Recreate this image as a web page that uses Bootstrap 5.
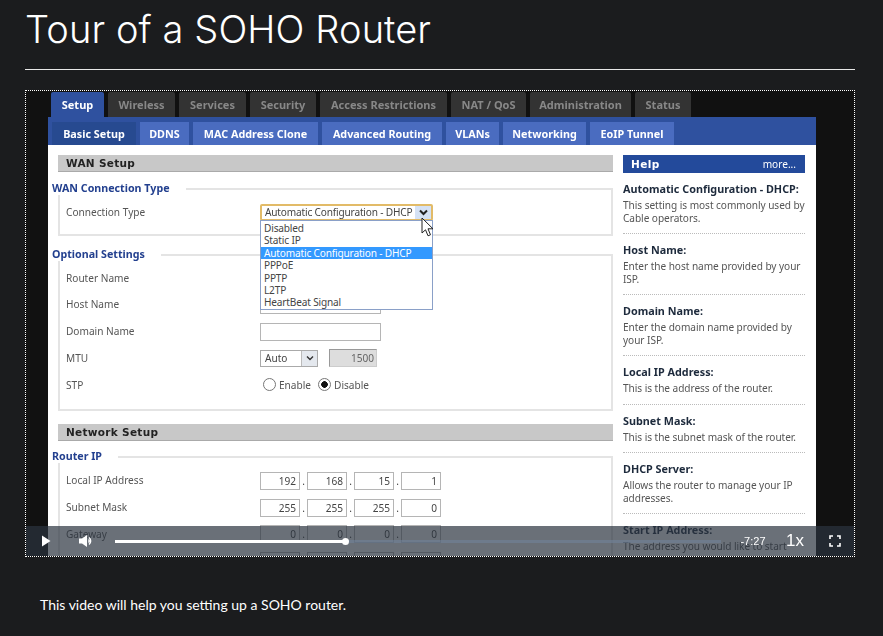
<!DOCTYPE html>
<html lang="en">
<head>
  <meta charset="UTF-8">
  <title>Tour of a SOHO Router</title>
  <meta name="viewport" content="width=device-width, initial-scale=1">
  <link href="https://cdn.jsdelivr.net/npm/bootstrap@5.3.0/dist/css/bootstrap.min.css" rel="stylesheet">
  <style>
    html, body { height: 100%; }
    body { background: #1b1c1e; color: #fff; overflow: hidden; font-family: "Lato", sans-serif; }
    .page-wrap { padding: 0 28px 0 25px; }
    .page-title { font-family: "Inter", sans-serif; font-weight: 300; font-size: 38px; letter-spacing: .1px; line-height: 44px; margin: 7px 0 0; height: 44px; color: #fff; }
    .page-rule { border-top: 1px solid #e8e8e8; opacity: 1; margin: 18px 0 20px; }

    /* video frame */
    .video-frame { position: relative; height: 467px; border: 1px dotted #fff; background: #111; padding: 1px 0 0 22px; overflow: hidden; }
    .router-ui { width: 768px; font-family: "Noto Sans", sans-serif; font-size: 10.1px; color: #555; filter: blur(.3px); }

    .main-tabs { padding-left: 3px; gap: 4px; height: 25px; }
    .main-tab { background: #333; color: #888; font-weight: 700; font-size: 11px; line-height: 25px; text-align: center; white-space: nowrap; border-radius: 2px 2px 0 0; }
    .main-tab.is-on { background: #2f519f; color: #fff; }
    .main-tab:nth-child(1) { width: 53px; }
    .main-tab:nth-child(2), .main-tab:nth-child(3) { width: 67px; }
    .main-tab:nth-child(4) { width: 66px; }
    .main-tab:nth-child(5) { width: 127px; }
    .main-tab:nth-child(6) { width: 75px; }
    .main-tab:nth-child(7) { width: 101px; }
    .main-tab:nth-child(8) { width: 56px; }
    .sub-tabs { background: #2f519f; height: 28px; padding: 5px 0 0 4px; gap: 4px; }
    .sub-tab { background: #4a6cc0; color: #fff; font-weight: 700; font-size: 10.8px; line-height: 23px; text-align: center; white-space: nowrap; }
    .sub-tab.is-on { background: #274a90; }
    .sub-tab:nth-child(1), .sub-tab:nth-child(7) { width: 84px; }
    .sub-tab:nth-child(2) { width: 49px; }
    .sub-tab:nth-child(3) { width: 125px; }
    .sub-tab:nth-child(4) { width: 120px; }
    .sub-tab:nth-child(5) { width: 53px; }
    .sub-tab:nth-child(6) { width: 83px; }

    .router-body { background: #fff; padding-left: 10px; gap: 10px; height: 420px; }
    .left-col { width: 555px; }
    .help-col { width: 182px; }

    .sec-bar { background: #c8c8c8; border-bottom: 1px solid #aaa; height: 17px; margin-top: 10px; padding-left: 8px; font-family: "DejaVu Sans", sans-serif; font-weight: 700; font-size: 10.5px; line-height: 17px; letter-spacing: .3px; color: #222; }
    .sec-bar.sec-two { margin-top: 13px; }
    .legend-row { height: 14px; margin: 9px 0 0 -6px; }
    .legend-row.legend-gap { margin-top: 11px; }
    .legend-row.legend-tight { margin-top: 8px; }
    .legend-text { color: #23408f; font-weight: 700; font-size: 10.7px; line-height: 14px; padding-right: 16px; white-space: nowrap; }
    .legend-line { border-top: 2px solid #e4e4e4; border-right: 2px solid #e4e4e4; margin-top: 7px; }
    .field-box { border: 2px solid #e4e4e4; border-top: 0; padding: 4px 0 10px 6px; }
    .field-box.box-short { padding-bottom: 8px; }
    .field-box.box-low { padding-top: 5px; }
    .field-row { height: 26.75px; }
    .field-label { width: 194px; flex: none; color: #555; }
    .plain-input { width: 121px; height: 18px; border: 1px solid #b5b5b5; border-radius: 0; padding: 0 3px; font-size: 10.1px; color: #444; background: #fff; }
    .mtu-select { width: 58px; height: 17px; border: 1px solid #aaa; color: #444; background: #fff; padding-left: 4px; line-height: 15px; margin-right: 11px; }
    .mtu-arrow { width: 16px; height: 100%; background: #e4e8ee; border-left: 1px solid #bbb; }
    .mtu-value { width: 48px; height: 18px; background: #ddd; border: 1px solid #ccc; border-top-color: #999; border-left-color: #999; text-align: right; padding-right: 2px; line-height: 16px; color: #666; }
    .stp-radio { width: 13px; height: 13px; border: 1px solid #777; border-radius: 50%; background: #fff; margin: -2px 3px 0 -1px; }
    .stp-radio.is-on { background: radial-gradient(circle, #111 0 3px, #fff 3.6px); }
    .ip-box { width: 40px; height: 18px; border: 1px solid #b5b5b5; border-radius: 0; padding: 0 3px; text-align: right; font-size: 10.1px; color: #444; background: #fff; }
    .ip-dot { width: 7px; text-align: center; color: #444; line-height: 22px; }

    .conn-select { position: relative; width: 173px; height: 17px; border: 2px solid #e2bb68; border-radius: 2px; background: #fff; color: #444; padding-left: 3px; line-height: 13px; letter-spacing: -.17px; white-space: nowrap; }
    .conn-arrow { position: absolute; right: 0; top: 0; width: 16px; height: 13px; background: #d5e2f5; }
    .conn-menu { position: absolute; left: -2px; top: 14px; width: 173px; background: #fff; border: 1px solid #8aa0c8; line-height: 12.4px; padding: 1px 0 0; z-index: 3; color: #444; font-size: 10.1px; }
    .conn-menu div { padding-left: 3px; }
    .conn-menu .is-hover { background: #3399ff; color: #fff; }
    .mouse-arrow { position: absolute; left: 159px; top: 11px; z-index: 4; }

    .help-bar { background: #234a9b; color: #fff; height: 18px; margin-top: 10px; padding: 0 9px 0 8px; line-height: 18px; }
    .help-bar b { font-family: "DejaVu Sans", sans-serif; font-size: 10.5px; letter-spacing: .4px; }
    .help-item { padding: 9px 0; border-bottom: 1px dotted #bbb; }
    .help-item h6 { margin: 0 0 4px; color: #1d2a3c; font-family: "Noto Sans", sans-serif; font-weight: 700; font-size: 10.8px; line-height: 13px; }
    .help-item p { margin: 0; line-height: 12.5px; color: #555; white-space: nowrap; letter-spacing: -.05px; }

    /* player controls */
    .player-bar { position: absolute; left: 0; right: 0; bottom: 0; height: 30px; background: rgba(43, 51, 63, .7); color: #fff; z-index: 5; }
    .ctl-box { width: 40px; height: 30px; flex: none; }
    .track { position: relative; width: 606px; height: 3px; margin-left: 9px; background: rgba(115, 133, 159, .55); flex: none; }
    .track-done { position: absolute; left: 0; top: 0; height: 3px; background: #fff; }
    .track-knob { position: absolute; left: 227px; top: -2px; width: 7px; height: 7px; border-radius: 50%; background: #fff; }
    .time-box { width: 54px; flex: none; font-family: "Liberation Sans", sans-serif; font-size: 11px; text-align: center; padding-left: 10px; }
    .rate-box { font-family: "Liberation Sans", sans-serif; font-size: 17px; }

    .desc-box { height: 79px; padding: 38px 0 0 15px; font-size: 14px; line-height: 20px; }
  </style>
</head>
<body>
  <div class="page-wrap">
    <h1 class="page-title">Tour of a SOHO Router</h1>
    <hr class="page-rule">

    <div class="video-frame">
      <div class="router-ui">
        <!-- top tabs -->
        <div class="main-tabs d-flex">
          <div class="main-tab is-on">Setup</div>
          <div class="main-tab">Wireless</div>
          <div class="main-tab">Services</div>
          <div class="main-tab">Security</div>
          <div class="main-tab">Access Restrictions</div>
          <div class="main-tab">NAT / QoS</div>
          <div class="main-tab">Administration</div>
          <div class="main-tab">Status</div>
        </div>
        <div class="sub-tabs d-flex">
          <div class="sub-tab is-on">Basic Setup</div>
          <div class="sub-tab">DDNS</div>
          <div class="sub-tab">MAC Address Clone</div>
          <div class="sub-tab">Advanced Routing</div>
          <div class="sub-tab">VLANs</div>
          <div class="sub-tab">Networking</div>
          <div class="sub-tab">EoIP Tunnel</div>
        </div>

        <div class="router-body d-flex">
          <div class="left-col">
            <div class="sec-bar">WAN Setup</div>

            <div class="legend-row d-flex">
              <div class="legend-text">WAN Connection Type</div>
              <div class="legend-line flex-grow-1"></div>
            </div>
            <div class="field-box box-short">
              <div class="field-row d-flex align-items-center">
                <div class="field-label">Connection Type</div>
                <div class="conn-select">
                  Automatic Configuration - DHCP
                  <div class="conn-arrow d-flex align-items-center justify-content-center">
                    <svg width="9" height="7" viewBox="0 0 9 7"><path d="M1 1.5 4.5 5 8 1.5" fill="none" stroke="#222" stroke-width="2"/></svg>
                  </div>
                  <div class="conn-menu">
                    <div>Disabled</div>
                    <div>Static IP</div>
                    <div class="is-hover">Automatic Configuration - DHCP</div>
                    <div>PPPoE</div>
                    <div>PPTP</div>
                    <div>L2TP</div>
                    <div>HeartBeat Signal</div>
                  </div>
                  <svg class="mouse-arrow" width="13" height="20" viewBox="0 0 13 20"><path d="M1 1v15l3.5-3.2 2.5 6 2.5-1-2.5-6h5z" fill="#fff" stroke="#222" stroke-width="1"/></svg>
                </div>
              </div>
            </div>

            <div class="legend-row legend-gap d-flex">
              <div class="legend-text">Optional Settings</div>
              <div class="legend-line flex-grow-1"></div>
            </div>
            <div class="field-box">
              <div class="field-row d-flex align-items-center">
                <div class="field-label">Router Name</div>
                <input class="plain-input" type="text">
              </div>
              <div class="field-row d-flex align-items-center">
                <div class="field-label">Host Name</div>
                <input class="plain-input" type="text">
              </div>
              <div class="field-row d-flex align-items-center">
                <div class="field-label">Domain Name</div>
                <input class="plain-input" type="text">
              </div>
              <div class="field-row d-flex align-items-center">
                <div class="field-label">MTU</div>
                <div class="mtu-select d-flex justify-content-between">
                  Auto
                  <div class="mtu-arrow d-flex align-items-center justify-content-center">
                    <svg width="8" height="6" viewBox="0 0 8 6"><path d="M1 1.5 4 4.5 7 1.5" fill="none" stroke="#333" stroke-width="1.4"/></svg>
                  </div>
                </div>
                <div class="mtu-value">1500</div>
              </div>
              <div class="field-row d-flex align-items-center">
                <div class="field-label">STP</div>
                <div class="d-flex align-items-center ms-1">
                  <span class="stp-radio"></span><span class="me-2">Enable</span>
                  <span class="stp-radio is-on"></span><span>Disable</span>
                </div>
              </div>
            </div>

            <div class="sec-bar sec-two">Network Setup</div>

            <div class="legend-row legend-tight d-flex">
              <div class="legend-text">Router IP</div>
              <div class="legend-line flex-grow-1"></div>
            </div>
            <div class="field-box box-low">
              <div class="field-row d-flex align-items-center">
                <div class="field-label">Local IP Address</div>
                <input class="ip-box" type="text" value="192"><span class="ip-dot">.</span>
                <input class="ip-box" type="text" value="168"><span class="ip-dot">.</span>
                <input class="ip-box" type="text" value="15"><span class="ip-dot">.</span>
                <input class="ip-box" type="text" value="1">
              </div>
              <div class="field-row d-flex align-items-center">
                <div class="field-label">Subnet Mask</div>
                <input class="ip-box" type="text" value="255"><span class="ip-dot">.</span>
                <input class="ip-box" type="text" value="255"><span class="ip-dot">.</span>
                <input class="ip-box" type="text" value="255"><span class="ip-dot">.</span>
                <input class="ip-box" type="text" value="0">
              </div>
              <div class="field-row d-flex align-items-center">
                <div class="field-label">Gateway</div>
                <input class="ip-box" type="text" value="0"><span class="ip-dot">.</span>
                <input class="ip-box" type="text" value="0"><span class="ip-dot">.</span>
                <input class="ip-box" type="text" value="0"><span class="ip-dot">.</span>
                <input class="ip-box" type="text" value="0">
              </div>
              <div class="field-row d-flex align-items-center">
                <div class="field-label"></div>
                <input class="ip-box" type="text"><span class="ip-dot"></span>
                <input class="ip-box" type="text"><span class="ip-dot"></span>
                <input class="ip-box" type="text"><span class="ip-dot"></span>
                <input class="ip-box" type="text">
              </div>
            </div>
          </div>

          <div class="help-col">
            <div class="help-bar d-flex justify-content-between"><b>Help</b><span>more...</span></div>
            <div class="help-item"><h6>Automatic Configuration - DHCP:</h6><p>This setting is most commonly used by<br>Cable operators.</p></div>
            <div class="help-item"><h6>Host Name:</h6><p>Enter the host name provided by your<br>ISP.</p></div>
            <div class="help-item"><h6>Domain Name:</h6><p>Enter the domain name provided by<br>your ISP.</p></div>
            <div class="help-item"><h6>Local IP Address:</h6><p>This is the address of the router.</p></div>
            <div class="help-item"><h6>Subnet Mask:</h6><p>This is the subnet mask of the router.</p></div>
            <div class="help-item"><h6>DHCP Server:</h6><p>Allows the router to manage your IP<br>addresses.</p></div>
            <div class="help-item"><h6>Start IP Address:</h6><p>The address you would like to start</p></div>
          </div>
        </div>
      </div>

      <div class="player-bar d-flex align-items-center">
        <div class="ctl-box d-flex align-items-center justify-content-center">
          <svg width="10" height="12" viewBox="0 0 10 12"><path d="M1 0.5v11l8.5-5.5z" fill="#fff"/></svg>
        </div>
        <div class="ctl-box d-flex align-items-center justify-content-center">
          <svg width="15" height="14" viewBox="0 0 15 14"><path d="M0 4.5h3L8 1v12L3 9.5H0z" fill="#fff"/><path d="M10 3.5a4.5 4.5 0 0 1 0 7M9.5 5.5a2 2 0 0 1 0 3" fill="none" stroke="#fff" stroke-width="1.4"/></svg>
        </div>
        <div class="track">
          <div class="track-done" style="width: 230px"></div>
          <div class="track-knob"></div>
        </div>
        <div class="time-box">-7:27</div>
        <div class="ctl-box rate-box d-flex align-items-center justify-content-center">1x</div>
        <div class="ctl-box d-flex align-items-center justify-content-center">
          <svg width="12" height="12" viewBox="0 0 12 12"><path d="M1 4V1h3M8 1h3v3M11 8v3H8M4 11H1V8" fill="none" stroke="#fff" stroke-width="1.6"/></svg>
        </div>
      </div>
    </div>

    <div class="desc-box">This video will help you setting up a SOHO router.</div>
  </div>
  <script src="https://cdn.jsdelivr.net/npm/bootstrap@5.3.0/dist/js/bootstrap.bundle.min.js"></script>
</body>
</html>
